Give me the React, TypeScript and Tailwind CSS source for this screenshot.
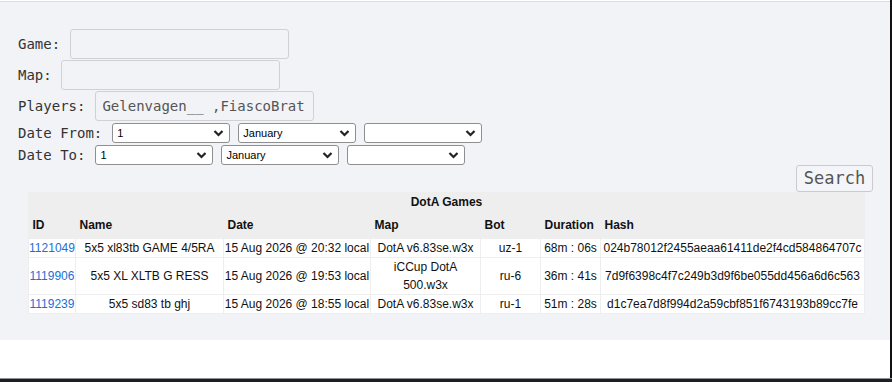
import React from "react";

const mono = { fontFamily: '"DejaVu Sans Mono", "Liberation Mono", monospace' };
const sans = { fontFamily: '"Liberation Sans", Arial, sans-serif' };

const games = [
  {
    id: "1121049",
    name: "5x5 xl83tb GAME 4/5RA",
    date: "15 Aug 2026 @ 20:32 local",
    map: "DotA v6.83se.w3x",
    bot: "uz-1",
    duration: "68m : 06s",
    hash: "024b78012f2455aeaa61411de2f4cd584864707c",
  },
  {
    id: "1119906",
    name: "5x5 XL XLTB G RESS",
    date: "15 Aug 2026 @ 19:53 local",
    map: "iCCup DotA 500.w3x",
    bot: "ru-6",
    duration: "36m : 41s",
    hash: "7d9f6398c4f7c249b3d9f6be055dd456a6d6c563",
  },
  {
    id: "1119239",
    name: "5x5 sd83 tb ghj",
    date: "15 Aug 2026 @ 18:55 local",
    map: "DotA v6.83se.w3x",
    bot: "ru-1",
    duration: "51m : 28s",
    hash: "d1c7ea7d8f994d2a59cbf851f6743193b89cc7fe",
  },
];

// plain box styled as a text input so the underscores don't get clipped
function TextField({ value = "" }: { value?: string }) {
  return (
    <div
      className="h-[30px] w-[219px] shrink-0 overflow-hidden whitespace-pre rounded-[3px] border border-[#cfd1d4] px-[6px] text-[14px] leading-[28px] text-[#555]"
      style={mono}
    >
      {value}
    </div>
  );
}

function Select({ value }: { value: string }) {
  return (
    <div className="relative h-[20px] w-[118px] shrink-0">
      <select
        defaultValue={value}
        className="block h-[20px] w-full appearance-none rounded-[3px] border border-[#8f8f8f] bg-white py-0 pl-[4px] text-[11px] leading-[18px] text-black outline-none"
        style={sans}
      >
        <option value={value}>{value}</option>
      </select>
      <svg
        className="pointer-events-none absolute right-[6px] top-[6px]"
        width="11"
        height="8"
        viewBox="0 0 11 8"
      >
        <polyline points="1.5,2 5.5,6 9.5,2" fill="none" stroke="#222" strokeWidth="2.2" />
      </svg>
    </div>
  );
}

function DateRow({ label }: { label: string }) {
  return (
    <div className="flex h-[20px] items-center gap-[10px]">
      <span className="text-[14px] leading-[20px] text-[#333]" style={mono}>
        {label}
      </span>
      <div className="flex gap-[8px]">
        <Select value="1" />
        <Select value="January" />
        <Select value="" />
      </div>
    </div>
  );
}

export default function App() {
  const headers = ["ID", "Name", "Date", "Map", "Bot", "Duration", "Hash"];
  const widths = [47, 148, 147, 110, 60, 60, 264];

  return (
    <div className="flex h-[382px] w-[892px] flex-col bg-white">
      <div className="flex flex-1">
        <div className="flex flex-1 flex-col">
          <div className="h-[2px] border-b border-[#dcdde0] bg-white" />
          <div className="flex h-[338px] flex-col bg-[#f2f3f7] pl-[18px] pr-[17px] pt-[27px]">
            <div className="flex flex-col gap-[1px]">
              <div className="flex items-center gap-[10px]">
                <span className="text-[14px] text-[#333]" style={mono}>Game:</span>
                <TextField />
              </div>
              <div className="flex items-center gap-[9px]">
                <span className="text-[14px] text-[#333]" style={mono}>Map:</span>
                <TextField />
              </div>
              <div className="flex items-center gap-[10px]">
                <span className="text-[14px] text-[#333]" style={mono}>Players:</span>
                <TextField value="Gelenvagen__ ,FiascoBrat" />
              </div>
            </div>
            <div className="mt-[2px] flex flex-col gap-[2px]">
              <DateRow label="Date From:" />
              <DateRow label="Date To:" />
            </div>
            <div className="flex justify-end">
              <button
                className="h-[27px] w-[77px] rounded-[3px] border border-[#c9cbcf] bg-[#f4f5f8] text-[17px] leading-none text-[#555]"
                style={mono}
              >
                Search
              </button>
            </div>
            <table
              className="ml-[10px] table-fixed border-collapse bg-[#eeeeee] text-[12px] text-[#111]"
              style={{ ...sans, width: 836 }}
            >
              <colgroup>
                {widths.map((w, i) => (
                  <col key={i} style={{ width: w }} />
                ))}
              </colgroup>
              <caption className="h-[20px] bg-[#eeeeee] pt-[3px] text-center font-bold leading-[15px]">
                DotA Games
              </caption>
              <thead>
                <tr className="h-[26px]">
                  {headers.map((h) => (
                    <th key={h} className="pl-[4px] text-left font-bold">
                      {h}
                    </th>
                  ))}
                </tr>
              </thead>
              <tbody>
                {games.map((g) => (
                  <tr key={g.id} className="bg-white">
                    <td className="border border-[#eeeeee] px-0 text-center leading-[18px] text-[#1a6fd8]">
                      {g.id}
                    </td>
                    <td className="border border-[#eeeeee] px-[1px] text-center leading-[18px]">{g.name}</td>
                    <td className="border border-[#eeeeee] px-0 text-center leading-[18px] whitespace-nowrap">{g.date}</td>
                    <td className="border border-[#eeeeee] px-[1px] text-center leading-[18px]">{g.map}</td>
                    <td className="border border-[#eeeeee] px-[1px] text-center leading-[18px]">{g.bot}</td>
                    <td className="border border-[#eeeeee] px-0 text-center leading-[18px] whitespace-nowrap">{g.duration}</td>
                    <td className="border border-[#eeeeee] px-0 text-center leading-[18px] whitespace-nowrap">{g.hash}</td>
                  </tr>
                ))}
              </tbody>
            </table>
          </div>
          <div className="flex-1 bg-white" />
        </div>
        <div className="w-[2px] bg-[#111]" />
      </div>
      <div className="h-[1px] bg-[#8d9097]" />
      <div className="h-[3px] bg-[#1d1e22]" />
    </div>
  );
}
